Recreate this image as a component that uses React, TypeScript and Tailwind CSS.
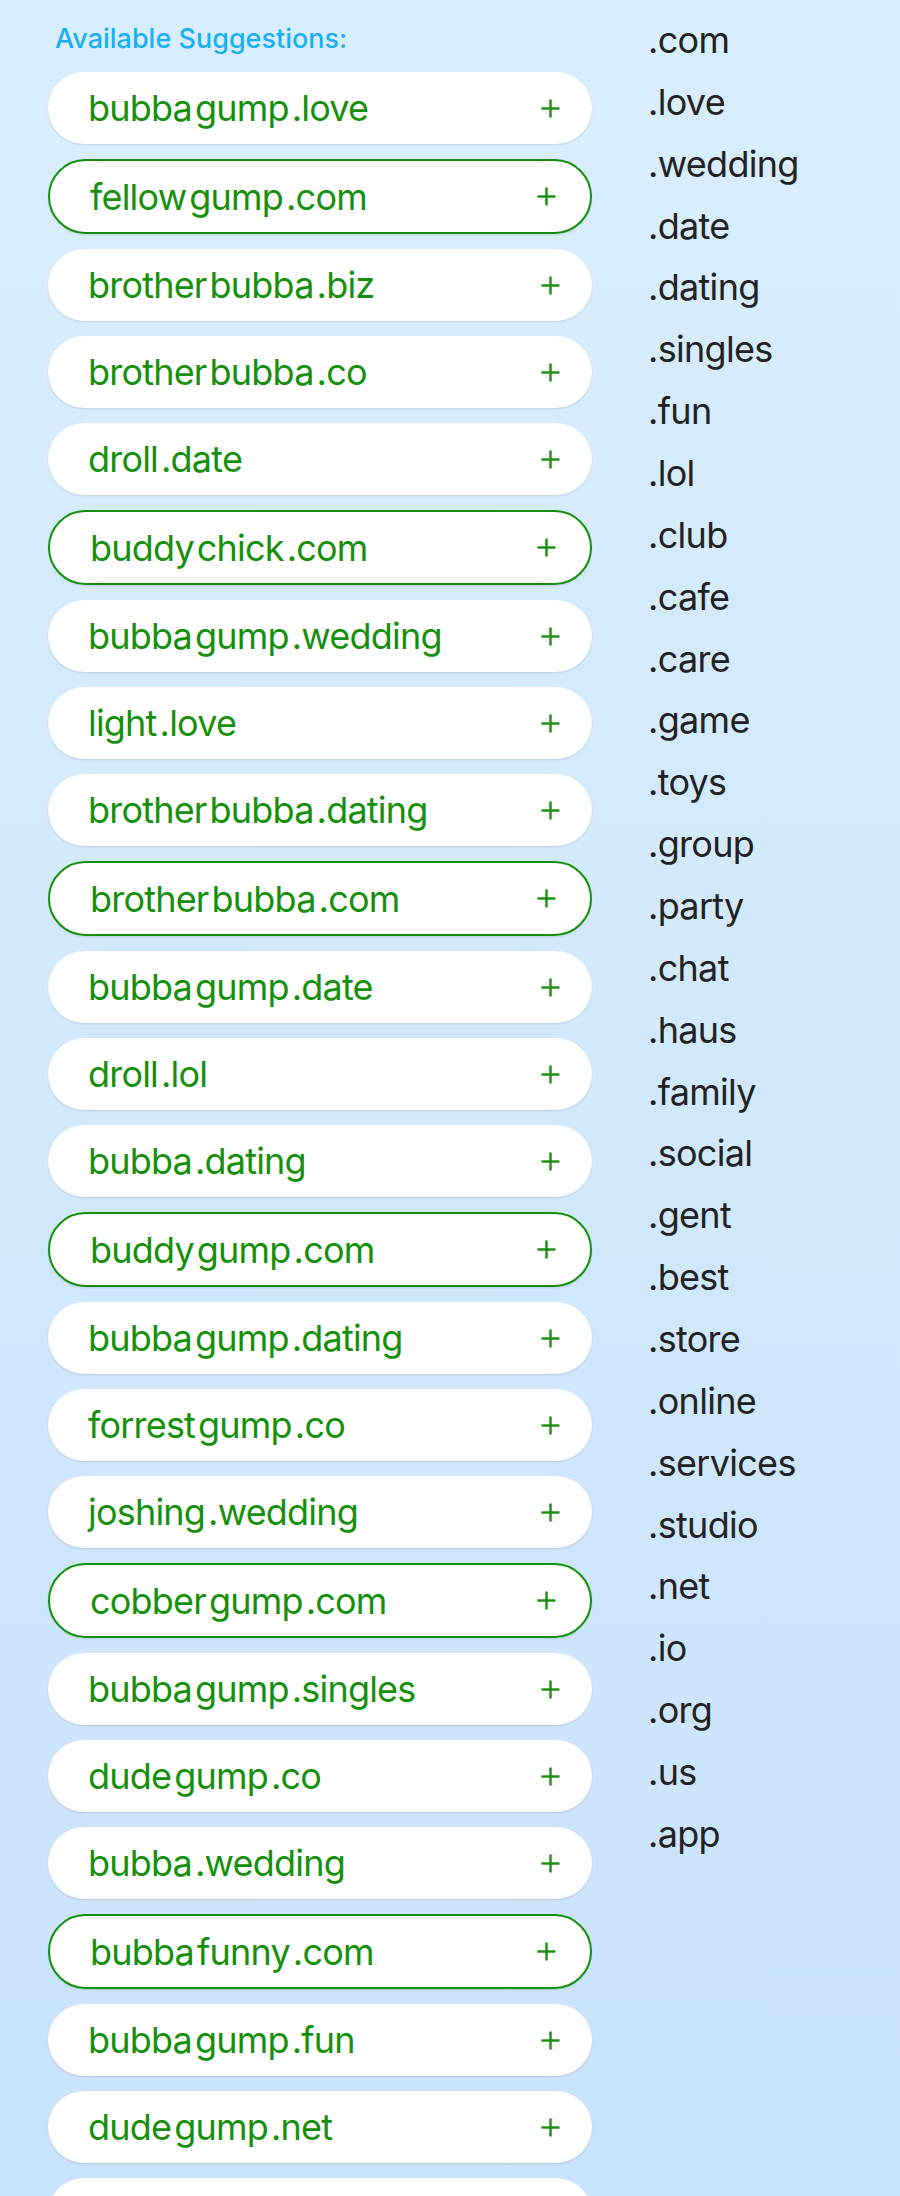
import React from "react";

const pills: { parts: string[]; outlined?: boolean }[] = [
  { parts: ["bubba", "gump", ".love"] },
  { parts: ["fellow", "gump", ".com"], outlined: true },
  { parts: ["brother", "bubba", ".biz"] },
  { parts: ["brother", "bubba", ".co"] },
  { parts: ["droll", ".date"] },
  { parts: ["buddy", "chick", ".com"], outlined: true },
  { parts: ["bubba", "gump", ".wedding"] },
  { parts: ["light", ".love"] },
  { parts: ["brother", "bubba", ".dating"] },
  { parts: ["brother", "bubba", ".com"], outlined: true },
  { parts: ["bubba", "gump", ".date"] },
  { parts: ["droll", ".lol"] },
  { parts: ["bubba", ".dating"] },
  { parts: ["buddy", "gump", ".com"], outlined: true },
  { parts: ["bubba", "gump", ".dating"] },
  { parts: ["forrest", "gump", ".co"] },
  { parts: ["joshing", ".wedding"] },
  { parts: ["cobber", "gump", ".com"], outlined: true },
  { parts: ["bubba", "gump", ".singles"] },
  { parts: ["dude", "gump", ".co"] },
  { parts: ["bubba", ".wedding"] },
  { parts: ["bubba", "funny", ".com"], outlined: true },
  { parts: ["bubba", "gump", ".fun"] },
  { parts: ["dude", "gump", ".net"] },
];

const tlds = [
  ".com", ".love", ".wedding", ".date", ".dating", ".singles", ".fun", ".lol", ".club", ".cafe",
  ".care", ".game", ".toys", ".group", ".party", ".chat", ".haus", ".family", ".social", ".gent",
  ".best", ".store", ".online", ".services", ".studio", ".net", ".io", ".org", ".us", ".app",
];

function Plus() {
  return (
    <svg width="19" height="19" viewBox="0 0 19 19" className="shrink-0">
      <line x1="9.5" y1="0.5" x2="9.5" y2="18.5" stroke="#16900c" strokeWidth="2.4" />
      <line x1="0.5" y1="9.5" x2="18.5" y2="9.5" stroke="#16900c" strokeWidth="2.4" />
    </svg>
  );
}

function Pill({ parts, outlined }: { parts: string[]; outlined?: boolean }) {
  return (
    <div
      className={
        outlined
          ? "flex h-[75px] w-[544px] items-center justify-between rounded-full border-2 border-[#16900c] bg-white pl-[40px] pr-[34px] shadow-[0_1px_2px_rgba(0,0,0,0.12)]"
          : "flex h-[72px] w-[544px] items-center justify-between rounded-full bg-white pl-[40px] pr-[32px] shadow-[0_1px_2px_rgba(0,0,0,0.12)]"
      }
    >
      <div className="flex items-baseline gap-[3px] text-[36px] leading-[44px] tracking-[-0.8px] text-[#16900c]">
        {parts.map((p, i) => (
          <span key={i}>{p}</span>
        ))}
      </div>
      <Plus />
    </div>
  );
}

export default function App() {
  return (
    <div
      className="flex min-h-[2196px] w-[900px] bg-gradient-to-b from-[#d9eefd] to-[#c9e3fc]"
      style={{ fontFamily: "Inter, 'Noto Sans', sans-serif" }}
    >
      <div className="flex flex-col pl-[48px] pt-[23px]">
        <div className="mb-[18px] pl-[7px] text-[27px] font-medium leading-[31px] text-[#19aff1]">
          Available Suggestions:
        </div>
        <div className="flex flex-col gap-[15px]">
          {pills.map((p, i) => (
            <Pill key={i} parts={p.parts} outlined={p.outlined} />
          ))}
          <div className="h-[72px] w-[544px] rounded-full bg-white shadow-[0_1px_2px_rgba(0,0,0,0.12)]" />
        </div>
      </div>
      <div className="ml-[56px] flex flex-col pt-[10px]">
        {tlds.map((t) => (
          <div key={t} className="text-[36px] leading-[61.86px] tracking-[-0.7px] text-[#222222]">
            {t}
          </div>
        ))}
      </div>
    </div>
  );
}
